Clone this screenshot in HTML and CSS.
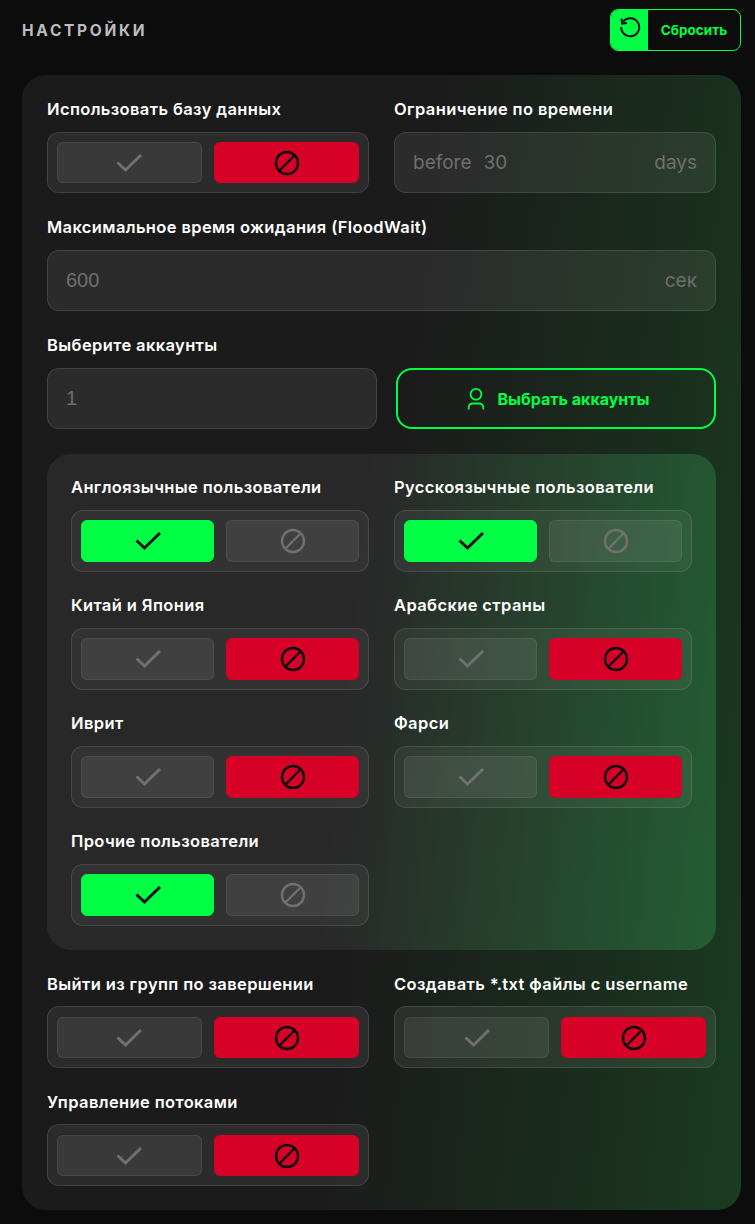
FILE: index.html
```html
<!DOCTYPE html>
<html lang="ru">
<head>
<meta charset="utf-8">
<title>Настройки</title>
<link rel="stylesheet" href="styles.css">
</head>
<body>
<svg class="sprite" width="0" height="0" aria-hidden="true">
  <symbol id="i-check" viewBox="0 0 28 24"><path d="M2.5 11.5 L10.5 19 L26 4" fill="none" stroke="currentColor" stroke-width="3"/></symbol>
  <symbol id="i-ban" viewBox="0 0 26 26"><circle cx="13" cy="13" r="11" fill="none" stroke="currentColor" stroke-width="2.4"/><path d="M5.5 20.5 L20.5 5.5" stroke="currentColor" stroke-width="2.4"/></symbol>
</svg>
<header class="top">
  <h1 class="title">НАСТРОЙКИ</h1>
  <button class="reset">
    <span class="reset-icon"><svg width="22" height="22" viewBox="0 0 22 22"><path d="M4.2 4.6 A9 9 0 1 1 2.2 10" fill="none" stroke="#0c0c0c" stroke-width="2"/><path d="M2.6 1.6 L3 6.6 L8 6" fill="none" stroke="#0c0c0c" stroke-width="2"/></svg></span>
    <span class="reset-text">Сбросить</span>
  </button>
</header>
<main class="panel">
  <div class="grid">
    <section class="field nudge">
      <div class="label">Использовать базу данных</div>
      <div class="toggle">
        <div class="opt"><svg class="ic-check"><use href="#i-check"/></svg></div>
        <div class="opt no"><svg class="ic-ban"><use href="#i-ban"/></svg></div>
      </div>
    </section>
    <section class="field">
      <div class="label">Ограничение по времени</div>
      <div class="input"><span class="prefix">before</span><span class="val">30</span><span class="unit">days</span></div>
    </section>
    <section class="field wide">
      <div class="label">Максимальное время ожидания (FloodWait)</div>
      <div class="input"><span class="val num">600</span><span class="unit">сек</span></div>
    </section>
    <section class="field wide">
      <div class="label">Выберите аккаунты</div>
      <div class="acc-row">
        <div class="input"><span class="val num">1</span></div>
        <button class="acc-btn">
          <svg width="18" height="22" viewBox="0 0 18 22"><circle cx="9" cy="6.3" r="5.4" fill="none" stroke="currentColor" stroke-width="1.8"/><path d="M1.7 21.5 V19.5 A4 4 0 0 1 5.7 15.5 H12.3 A4 4 0 0 1 16.3 19.5 V21.5" fill="none" stroke="currentColor" stroke-width="1.8"/></svg>
          Выбрать аккаунты
        </button>
      </div>
    </section>
    <section class="inner wide">
      <div class="field">
        <div class="label">Англоязычные пользователи</div>
        <div class="toggle">
          <div class="opt yes"><svg class="ic-check"><use href="#i-check"/></svg></div>
          <div class="opt"><svg class="ic-ban"><use href="#i-ban"/></svg></div>
        </div>
      </div>
      <div class="field">
        <div class="label">Русскоязычные пользователи</div>
        <div class="toggle">
          <div class="opt yes"><svg class="ic-check"><use href="#i-check"/></svg></div>
          <div class="opt"><svg class="ic-ban"><use href="#i-ban"/></svg></div>
        </div>
      </div>
      <div class="field">
        <div class="label">Китай и Япония</div>
        <div class="toggle">
          <div class="opt"><svg class="ic-check"><use href="#i-check"/></svg></div>
          <div class="opt no"><svg class="ic-ban"><use href="#i-ban"/></svg></div>
        </div>
      </div>
      <div class="field">
        <div class="label">Арабские страны</div>
        <div class="toggle">
          <div class="opt"><svg class="ic-check"><use href="#i-check"/></svg></div>
          <div class="opt no"><svg class="ic-ban"><use href="#i-ban"/></svg></div>
        </div>
      </div>
      <div class="field">
        <div class="label">Иврит</div>
        <div class="toggle">
          <div class="opt"><svg class="ic-check"><use href="#i-check"/></svg></div>
          <div class="opt no"><svg class="ic-ban"><use href="#i-ban"/></svg></div>
        </div>
      </div>
      <div class="field">
        <div class="label">Фарси</div>
        <div class="toggle">
          <div class="opt"><svg class="ic-check"><use href="#i-check"/></svg></div>
          <div class="opt no"><svg class="ic-ban"><use href="#i-ban"/></svg></div>
        </div>
      </div>
      <div class="field">
        <div class="label">Прочие пользователи</div>
        <div class="toggle">
          <div class="opt yes"><svg class="ic-check"><use href="#i-check"/></svg></div>
          <div class="opt"><svg class="ic-ban"><use href="#i-ban"/></svg></div>
        </div>
      </div>
    </section>
    <section class="field tail nudge">
      <div class="label">Выйти из групп по завершении</div>
      <div class="toggle">
        <div class="opt"><svg class="ic-check"><use href="#i-check"/></svg></div>
        <div class="opt no"><svg class="ic-ban"><use href="#i-ban"/></svg></div>
      </div>
    </section>
    <section class="field tail">
      <div class="label">Создавать *.txt файлы с username</div>
      <div class="toggle">
        <div class="opt"><svg class="ic-check"><use href="#i-check"/></svg></div>
        <div class="opt no"><svg class="ic-ban"><use href="#i-ban"/></svg></div>
      </div>
    </section>
    <section class="field tail nudge">
      <div class="label">Управление потоками</div>
      <div class="toggle">
        <div class="opt"><svg class="ic-check"><use href="#i-check"/></svg></div>
        <div class="opt no"><svg class="ic-ban"><use href="#i-ban"/></svg></div>
      </div>
    </section>
  </div>
</main>
</body>
</html>
```

FILE: styles.css
```css
* { box-sizing: border-box; }
html, body { margin: 0; height: 100%; }
body {
  background: #0c0c0c;
  color: #fff;
  font-family: Inter, "Noto Sans", sans-serif;
  padding: 9px 14px 14px 22px;
  overflow: hidden;
}
.sprite { position: absolute; }
.top {
  display: flex;
  justify-content: space-between;
  align-items: center;
  height: 42px;
  margin-bottom: 24px;
}
.title {
  margin: 0;
  font-size: 15.5px;
  font-weight: 700;
  letter-spacing: 2.7px;
  color: #bdbdbd;
}
.reset {
  display: flex;
  width: 131px;
  height: 42px;
  padding: 0;
  background: transparent;
  border: 1.3px solid #00ff44;
  border-radius: 8px;
  overflow: hidden;
  font: inherit;
}
.reset-icon {
  width: 37px;
  background: #00ff44;
  display: flex;
  justify-content: center;
  padding-top: 7px;
}
.reset-text {
  flex: 1;
  align-self: center;
  color: #00ff44;
  font-size: 13.5px;
  font-weight: 700;
  text-align: center;
}
.panel {
  border-radius: 24px;
  padding: 25px;
  height: 1135px;
  background: linear-gradient(96deg, #1b1b1b 0%, #1b1b1b 50%, #1a2d1e 80%, #1a3c21 100%);
}
.grid {
  display: grid;
  grid-template-columns: 322px 322px;
  column-gap: 25px;
  row-gap: 25px;
}
.wide { grid-column: 1 / -1; }
.label {
  font-size: 16.5px;
  font-weight: 600;
  line-height: 18px;
  margin-bottom: 14px;
  white-space: nowrap;
  letter-spacing: 0.38px;
}
.toggle {
  display: flex;
  gap: 12px;
  height: 61px;
  padding: 9px;
  border: 1px solid rgba(255, 255, 255, 0.11);
  border-radius: 12px;
  background: rgba(255, 255, 255, 0.07);
}
.opt {
  flex: 1;
  display: flex;
  align-items: center;
  justify-content: center;
  border: 1px solid rgba(255, 255, 255, 0.07);
  border-radius: 6px;
  background: rgba(255, 255, 255, 0.07);
  color: #707070;
}
.opt.yes { background: #00ff44; border-color: #00ff44; color: #0c0c0c; }
.opt.no { background: #d70026; border-color: #d70026; color: #0c0c0c; }
.ic-check { width: 28px; height: 24px; }
.ic-ban { width: 26px; height: 26px; }
.nudge .ic-check { margin-right: 2px; }
.tail .label { margin-bottom: 13px; }
.tail .toggle { height: 62px; padding-top: 10px; }
.input {
  display: flex;
  align-items: center;
  height: 61px;
  padding: 0 18px;
  border: 1px solid rgba(255, 255, 255, 0.11);
  border-radius: 12px;
  background: rgba(255, 255, 255, 0.07);
  color: #6f6f6f;
  font-size: 19px;
}
.prefix { margin-right: 12px; }
.num { font-family: "Liberation Sans", sans-serif; font-size: 20px; }
.unit { margin-left: auto; }
.acc-row { display: flex; gap: 19px; }
.acc-row .input { width: 330px; }
.acc-btn {
  flex: 1;
  display: flex;
  align-items: center;
  justify-content: center;
  gap: 12px;
  height: 61px;
  padding: 0 0 0 5px;
  background: transparent;
  border: 2px solid #00ff44;
  border-radius: 16px;
  color: #00ff44;
  font: inherit;
  font-size: 16px;
  font-weight: 700;
}
.inner {
  display: grid;
  grid-template-columns: 298px 298px;
  column-gap: 25px;
  row-gap: 24px;
  padding: 24px;
  border-radius: 24px;
  background: linear-gradient(96deg, rgba(255,255,255,0.06) 0%, rgba(255,255,255,0.06) 45%, rgba(52,160,82,0.36) 100%);
}
.inner .toggle { height: 62px; background: rgba(255, 255, 255, 0.05); }
```
